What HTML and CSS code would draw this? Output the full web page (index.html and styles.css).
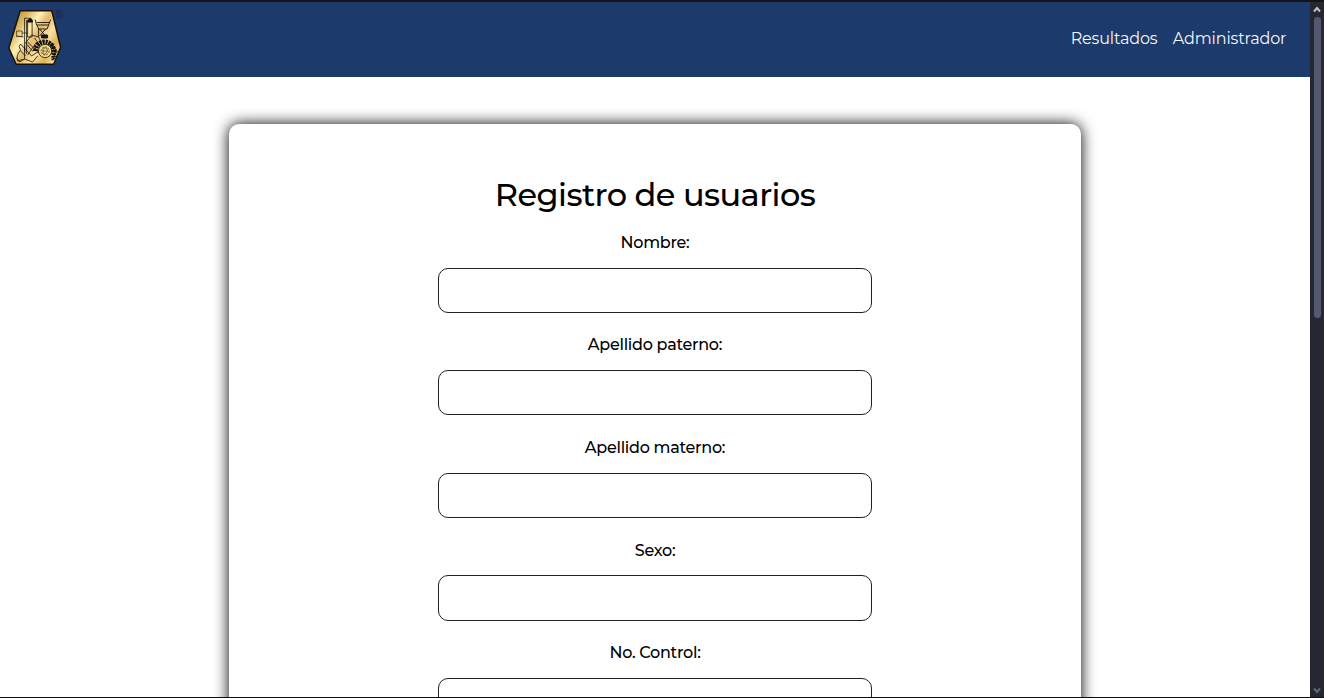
FILE: index.html
```html
<!DOCTYPE html>
<html lang="es">
<head>
<meta charset="utf-8">
<title>Registro de usuarios</title>
<link rel="stylesheet" href="styles.css">
</head>
<body>
<div class="window">
  <div class="page">
    <header class="navbar">
      <svg class="logo" viewBox="-0.6 0 58 58" width="58" height="58" fill="none" stroke="#15130c">
        <defs>
          <linearGradient id="gold" x1="0" y1="0.15" x2="1" y2="0.85">
            <stop offset="0" stop-color="#b98a38"/>
            <stop offset=".2" stop-color="#dcb762"/>
            <stop offset=".36" stop-color="#fff0b8"/>
            <stop offset=".5" stop-color="#e4b86c"/>
            <stop offset=".66" stop-color="#fbe3a0"/>
            <stop offset=".82" stop-color="#dcb35a"/>
            <stop offset="1" stop-color="#fff0ac"/>
          </linearGradient>
        </defs>
        <path d="M12.6 2.7H44.2L53 39.2L46 56.3H8.6L1.2 40Z" fill="url(#gold)" stroke-width="1.5"/>
        <path d="M17 10V44M19 12V46M17 10.2H21M20 13V29H24.5V13Z" stroke-width=".8"/>
        <path d="M20 14C20.5 9 24.500 9 25 14Z" fill="#15130c" stroke-width="1"/>
        <path d="M9 23H14.5V28.5H9ZM9 28L16 29M14.5 25H20" stroke-width=".6"/>
        <path d="M27.5 11.5L29 17H41L43 11.5M29 14.5H42M29.5 17L31 21H39.5L41 17M32 21L37 27M38 21L32 28M31 21V29" stroke-width=".9"/>
        <path d="M24 27L18 35L25 43L32 37L27 30M13 36L24 48L33 42M20 34L34 48M13 36Q10 38 13 42Q8 48 10 53L17 51L25 54L30 48M18 48L13 43M17 51L12 54L9 50M17 38V51M29 34L20 47M24 27L31 29L34 35" stroke-width=".8"/>
        <path d="M34 27H40V30H34Z" fill="#15130c"/>
        <path d="M28 43A9 9 0 1 1 45 47" stroke-width="5" stroke-dasharray="2.2 .8"/>
        <circle cx="37.5" cy="43" r="6.6" fill="#f4d989" stroke-width=".8"/>
        <circle cx="37.5" cy="43" r="4" stroke-width=".6" stroke-dasharray="2 1"/>
        <path d="M35.5 40H39L40 43L38 46H35.5ZM34.5 43H40" stroke-width=".5"/>
        <path d="M43 36L49.5 44M45 48L45 53M48 43L46.5 51" stroke-width="2.4" stroke-dasharray="1.7 .7"/>
        <ellipse cx="51.7" cy="6.2" rx="3.3" ry="3.9" stroke="#1b2134" stroke-width=".8"/>
        <path d="M50.7 8.4V4.2H52.2Q53.7 5.2 52.2 6.4H50.7M52.2 6.4L53 8.4" stroke="#1b2134" stroke-width=".5"/>
      </svg>
      <nav class="links">
        <a class="link results">Resultados</a>
        <a class="link admin">Administrador</a>
      </nav>
    </header>
    <main class="content">
      <form class="card">
        <h1 class="title">Registro de usuarios</h1>
        <div class="field"><label class="label" for="nombre">Nombre:</label><input class="input" id="nombre" type="text"></div>
        <div class="field"><label class="label" for="paterno">Apellido paterno:</label><input class="input" id="paterno" type="text"></div>
        <div class="field"><label class="label" for="materno">Apellido materno:</label><input class="input" id="materno" type="text"></div>
        <div class="field"><label class="label" for="sexo">Sexo:</label><input class="input" id="sexo" type="text"></div>
        <div class="field"><label class="label" for="control">No. Control:</label><input class="input" id="control" type="text"></div>
      </form>
    </main>
  </div>
  <div class="scrollbar">
    <svg class="arrow" viewBox="0 0 8 7" width="8" height="7"><path d="M1 5.5L4 2L7 5.5" fill="none" stroke="#c4c5c8" stroke-width="2"/></svg>
    <div class="thumb"></div>
    <svg class="arrow down" viewBox="0 0 8 7" width="8" height="7"><path d="M1 1.5L4 5L7 1.5" fill="none" stroke="#66676c" stroke-width="2"/></svg>
  </div>
</div>
</body>
</html>
```
FILE: styles.css
```css
* { box-sizing: border-box; }
html, body { margin: 0; height: 100%; overflow: hidden; }
body { font-family: Montserrat, Inter, sans-serif; color: #000; }
.window {
  display: flex;
  height: 698px;
  border-top: 2px solid #151515;
  border-bottom: 1px solid #0b0b0b;
}
.page { flex: 1; height: 695px; overflow: hidden; background: #fff; }
.navbar {
  display: flex;
  justify-content: space-between;
  height: 75px;
  padding: 6px 24.2px 0 7px;
  background: #1c3a6b;
}
.logo { display: block; }
.links { display: flex; gap: 15.2px; padding-top: 19px; }
.link { font-size: 16px; line-height: 24px; color: #f3f5f8; white-space: nowrap; }
.results { width: 87px; letter-spacing: -.14px; }
.admin { width: 113px; letter-spacing: -.15px; }
.content { display: flex; justify-content: center; padding-top: 47px; }
.card {
  width: 852px;
  height: 900px;
  padding-top: 47px;
  border-radius: 10px;
  background: #fff;
  box-shadow: 0 0 15px #000;
}
.title {
  margin: 0 0 11.8px;
  font-size: 32px;
  font-weight: 500;
  line-height: 48px;
  letter-spacing: -.56px;
  text-align: center;
  white-space: nowrap;
}
.field { display: flex; flex-direction: column; align-items: center; height: 102.6px; }
.label { font-size: 16px; font-weight: 500; line-height: 24px; letter-spacing: -.27px; white-space: nowrap; }
.input {
  width: 434px;
  height: 45.2px;
  margin: 12.8px 0 0;
  padding: 0 12px;
  border: 1px solid #212121;
  border-radius: 10px;
  background: #fff;
  font: inherit;
}
.scrollbar {
  display: flex;
  flex-direction: column;
  align-items: center;
  width: 14px;
  background: #252833;
}
.arrow { margin-top: 4px; }
.thumb { width: 7px; height: 301px; margin-top: 4px; border-radius: 4px; background: #535971; }
.down { margin: auto 0 3px; }
```
